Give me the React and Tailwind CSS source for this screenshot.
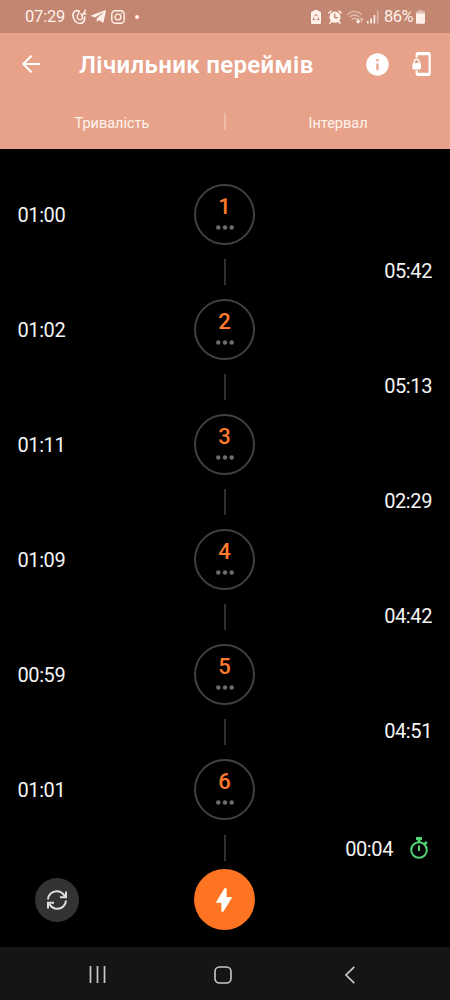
import React from 'react'
import { MdInfo, MdPhonelinkLock } from 'react-icons/md'
import { FaTelegramPlane } from 'react-icons/fa'

const contractions = [
  { id: 1, duration: '01:00', interval: '05:42' },
  { id: 2, duration: '01:02', interval: '05:13' },
  { id: 3, duration: '01:11', interval: '02:29' },
  { id: 4, duration: '01:09', interval: '04:42' },
  { id: 5, duration: '00:59', interval: '04:51' },
  { id: 6, duration: '01:01', interval: '00:04', running: true },
]

function StatusBar() {
  return (
    <div className="flex h-[33px] shrink-0 items-center bg-[#c28671] pr-[25px] pl-[25px] text-[#fff1ea]">
      <span className="w-[47px] text-[16.5px] leading-[18px] tracking-[-0.2px]">07:29</span>
      {/* bird-like app icon */}
      <svg className="h-[16px] w-[15px]" viewBox="0 0 15 16" fill="none" stroke="currentColor" strokeLinecap="round">
        <path d="M7 2.300C4.500.8 1.200 2.200 1 5.600.8 9.800 3.800 14.500 7.800 14.500c3.400 0 5.200-2.800 4.900-6.300" strokeWidth="1.700" />
        <path d="M7 2.300c.8 1.700-1.600 2.600-1.800 5-.1 2.200 1.500 3.600 3.300 3.300 2-.3 2.600-2.200 1.700-3.800L8.800 4.500" strokeWidth="1.300" />
        <path d="M10 7.200 13.500 1M11.300 5l2.700-.3" strokeWidth="1.400" />
      </svg>
      <FaTelegramPlane className="ml-[3px] size-[17px]" />
      <svg className="ml-[4px] size-[14px]" viewBox="0 0 14 14" fill="none" stroke="currentColor" strokeWidth="1.400">
        <rect x=".8" y=".8" width="12.400" height="12.400" rx="3.500" />
        <circle cx="7" cy="7" r="2.900" />
        <circle cx="10.500" cy="3.500" r=".4" strokeWidth=".8" />
      </svg>
      <span className="ml-[10px] size-[4px] rounded-full bg-[#fff1ea]" />

      <svg className="ml-auto h-[14px] w-[10px]" viewBox="0 0 10 14">
        <path d="M3 0h4v1.300h1.500A1.500 1.500 0 0 1 10 2.800v9.700a1.500 1.500 0 0 1-1.500 1.500h-7A1.500 1.500 0 0 1 0 12.500V2.800a1.500 1.500 0 0 1 1.500-1.500H3z" fill="currentColor" />
        <path d="M3.600 6.200 5 4.300l1.400 1.900M7.300 7.500l.7 2.200H6M4.400 9.700H2l.8-2.200" fill="none" stroke="#b57966" strokeWidth="1" />
      </svg>
      <svg className="ml-[7px] h-[14px] w-[14px]" viewBox="0 0 14 14" fill="none" strokeLinecap="round">
        <circle cx="7" cy="7.200" r="5.600" fill="currentColor" />
        <path d="M.8 3 3 1M13.200 3 11 1M3.300 11.500l-1.300 1.700M10.700 11.500l1.300 1.700" stroke="currentColor" strokeWidth="1.500" />
        <path d="M6.800 4v3.600h2.700" stroke="#b57966" strokeWidth="1.200" />
      </svg>
      <svg className="ml-[5px] h-[14px] w-[17px]" viewBox="0 0 17 14" fill="none" stroke="currentColor" strokeLinecap="round">
        <g strokeWidth="1.300" opacity=".5">
          <path d="M.8 4.200a9.500 9.500 0 0 1 13.400 0" />
          <path d="M3 6.800a6.500 6.500 0 0 1 9 0" />
          <path d="M5.200 9.200a3.400 3.400 0 0 1 4.400 0" />
          <path d="M14.600 12V8.300M13.300 9.400l1.300-1.300 1.300 1.300" />
        </g>
        <path d="M11.200 8.800v3.800M9.700 11.300l1.500 1.500 1.500-1.500" strokeWidth="1.300" />
      </svg>
      <svg className="ml-[3px] h-[14px] w-[12px]" viewBox="0 0 12 14" fill="currentColor">
        <path d="M0 11h1.600v2.500H0zM3.300 8.500h1.600v5H3.300zM6.600 5h1.600v8.500H6.600z" />
        <path d="M9.900 1h1.600v12.500H9.900z" opacity=".45" />
      </svg>
      <span className="ml-[5px] w-[31px] text-[16.5px] leading-[18px] tracking-[-0.5px]">86%</span>
      <svg className="ml-[1px] h-[14px] w-[9px]" viewBox="0 0 9 14" fill="currentColor">
        <path d="M2.500 0h4v1.200H8A1 1 0 0 1 9 2.200V4H0V2.200a1 1 0 0 1 1-1h1.500z" opacity=".5" />
        <path d="M0 3.500h9v9a1.200 1.200 0 0 1-1.200 1.200H1.200A1.200 1.200 0 0 1 0 12.500z" />
      </svg>
    </div>
  )
}

function Header() {
  return (
    <header className="h-[116px] shrink-0 bg-[#e8a289] text-white">
      <div className="flex h-[62px] items-center pr-[16px] pl-[22px]">
        <svg className="h-[18px] w-[18px]" viewBox="0 0 18 18" fill="none" stroke="currentColor" strokeWidth="2" strokeLinecap="round" strokeLinejoin="round">
          <path d="M17 9H1.200M9 1.200 1.200 9 9 16.800" />
        </svg>
        <h1 className="mt-[2px] ml-[39px] grow text-[24px] leading-7 font-semibold tracking-[0.35px] whitespace-nowrap">Лічильник переймів</h1>
        <MdInfo className="size-[27px] shrink-0" />
        <MdPhonelinkLock className="ml-[17px] size-[26px] shrink-0" />
      </div>
      <div className="flex h-[54px] items-center text-[14.5px] text-[#fff4ee]">
        <span className="w-[224px] pt-[4px] text-center">Тривалість</span>
        <span className="mb-[2px] h-[17px] w-[2px] bg-[#f0bba8]" />
        <span className="grow pt-[4px] text-center">Інтервал</span>
      </div>
    </header>
  )
}

function Contraction({ id, duration, interval, running }) {
  return (
    <div className="h-[115px] pr-[18px] pl-[17.5px] text-[20px] leading-6 tracking-[-0.4px] text-[#f4f4f4]">
      <div className="grid h-[61px] grid-cols-[176.500px_61px_1fr] items-center">
        <span className="mt-[1px]">{duration}</span>
        <button type="button" className="flex size-[61px] flex-col items-center rounded-full border-2 border-[#404040]">
          <span className="mt-[9px] text-[22px] leading-[24px] font-medium tracking-normal text-[#ff7a2d]">{id}</span>
          <svg className="mt-[6px] h-[5px] w-[18px]" viewBox="0 0 18 5" fill="#6c6c6c">
            <circle cx="2.300" cy="2.500" r="2.200" />
            <circle cx="9" cy="2.500" r="2.200" />
            <circle cx="15.700" cy="2.500" r="2.200" />
          </svg>
        </button>
      </div>
      <div className={running ? 'mt-[15px] grid h-[26px] grid-cols-[206.500px_2px_1fr] items-center' : 'mt-[14px] grid h-[26px] grid-cols-[206.500px_2px_1fr] items-center'}>
        <span className="col-start-2 h-[26px] bg-[#303030]" />
        {running ? (
          <span className="flex items-center justify-end pt-[2px]">
            {interval}
            <Stopwatch />
          </span>
        ) : (
          <span className="-mt-[2px] text-right">{interval}</span>
        )}
      </div>
    </div>
  )
}

function Stopwatch() {
  return (
    <svg className="mr-[4px] mb-[2px] ml-[17px] h-[22px] w-[18px]" viewBox="0 0 18 22" fill="none" stroke="#4fd675" strokeWidth="2">
      <circle cx="9" cy="13" r="7.800" />
      <path d="M9 8.500v5.500" />
      <path d="M14.300 7.500l2.500-2.500" strokeWidth="2.600" />
      <path d="M6 1.500h6" strokeWidth="3" />
      <path d="M9 2v3.500" strokeWidth="3" />
    </svg>
  )
}

function NavBar() {
  return (
    <nav className="flex h-[53px] shrink-0 items-center bg-[#151515] pt-[2px] text-[#c9c9c9]">
      <svg className="ml-[89px] h-[17px] w-[17px]" viewBox="0 0 17 17" stroke="currentColor" strokeWidth="1.700">
        <path d="M1.500 0v17M8.500 0v17M15.500 0v17" />
      </svg>
      <svg className="ml-[108px] size-[18px]" viewBox="0 0 18 18" fill="none" stroke="currentColor" strokeWidth="1.600">
        <rect x="1" y="1" width="16" height="16" rx="4.500" />
      </svg>
      <svg className="ml-[112px] h-[18px] w-[11px]" viewBox="0 0 11 18" fill="none" stroke="currentColor" strokeWidth="1.700">
        <path d="M10.300.8 2 9l8.300 8.200" />
      </svg>
    </nav>
  )
}

export default function App() {
  return (
    <div className="flex h-[1000px] w-[450px] flex-col overflow-hidden bg-black font-['Roboto',sans-serif]">
      <StatusBar />
      <Header />
      <main className="grow pt-[35px]">
        {contractions.map((item) => (
          <Contraction key={item.id} {...item} />
        ))}
        <div className="-mt-[5px] grid h-[61px] grid-cols-[194px_61px_1fr] items-center">
          <button type="button" className="ml-[35px] flex size-[44px] items-center justify-center rounded-full bg-[#333333]">
            <svg className="h-[20px] w-[20px]" viewBox="0 0 20 20" fill="none" stroke="#dedede" strokeWidth="2">
              <path d="M1 9.500C1.200 4.500 5 1.200 9.700 1.200c3.600 0 6.300 1.900 8 5" />
              <path d="M19 1.500v5.700h-6" />
              <path d="M19 10.500c-.2 5-4 8.300-8.700 8.300-3.600 0-6.300-1.900-8-5" />
              <path d="M1 18.500v-5.700h6" />
            </svg>
          </button>
          <button type="button" className="flex size-[61px] items-center justify-center rounded-full bg-[#ff7423]">
            <svg className="mr-[1px] h-[24px] w-[16px]" viewBox="0 0 16 24" fill="white" stroke="white" strokeWidth="1" strokeLinejoin="round">
              <path d="M8.900.5h1.200V9.600H15.500L7 23.500H5.900V14.300H.5z" />
            </svg>
          </button>
        </div>
      </main>
      <NavBar />
    </div>
  )
}
